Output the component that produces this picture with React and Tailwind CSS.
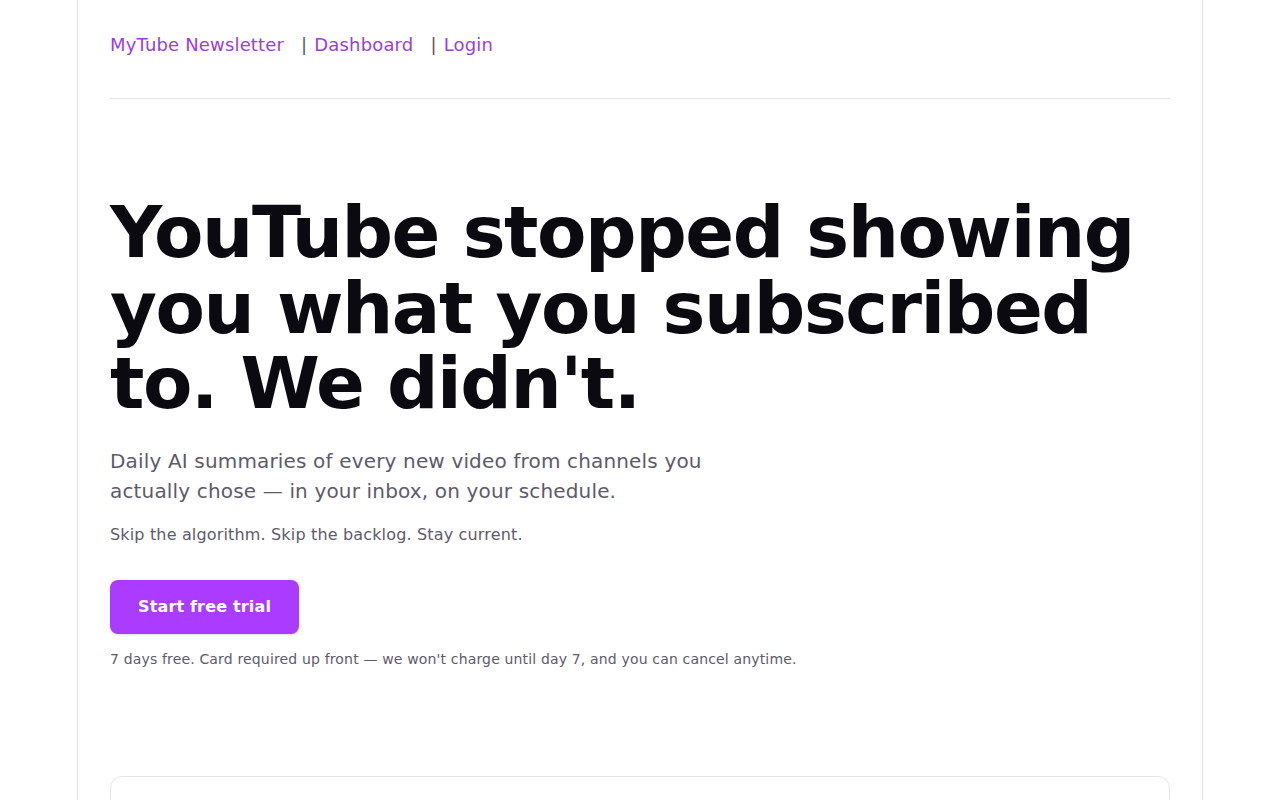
export default function App() {
  return (
    <div className="min-h-screen bg-white">
      <div className="mx-auto w-[1126px] min-h-screen border-x border-[#e5e5e8] px-8 font-['DejaVu_Sans',sans-serif] tracking-[0.01em]">
        <nav className="flex items-center pt-[31px] pb-[40px] leading-[27px] border-b border-[#e5e5e8] text-[18px] text-[#9b3de0]">
          <a href="#" className="text-[#9b3de0]">MyTube Newsletter</a>
          <span className="ml-[17px] text-[#5b5766]">|</span>
          <a href="#" className="ml-[7px] text-[#9b3de0]">Dashboard</a>
          <span className="ml-[17px] text-[#5b5766]">|</span>
          <a href="#" className="ml-[7px] text-[#9b3de0]">Login</a>
        </nav>

        <section className="pt-[96px] pb-[106px]">
          <h1 className="text-[72px] font-bold leading-[1.05] tracking-[-0.02em] text-[#0b0a10]">
            YouTube stopped showing you what you subscribed to. We didn't.
          </h1>
          <p className="mt-[24px] max-w-[640px] text-[20px] leading-[30px] text-[#5e5a6b]">
            Daily AI summaries of every new video from channels you actually chose — in your inbox, on your schedule.
          </p>
          <p className="mt-[17px] text-[16px] text-[#5e5a6b]">
            Skip the algorithm. Skip the backlog. Stay current.
          </p>
          <button className="mt-[33px] h-[54px] w-[189px] rounded-lg bg-[#aa3bff] text-[16px] font-bold text-white shadow-sm">
            Start free trial
          </button>
          <p className="mt-[15px] text-[14px] text-[#5e5a6b]">
            7 days free. Card required up front — we won't charge until day 7, and you can cancel anytime.
          </p>
        </section>

        <div className="h-[200px] rounded-xl border border-[#e5e5e8]"></div>
      </div>
    </div>
  );
}
